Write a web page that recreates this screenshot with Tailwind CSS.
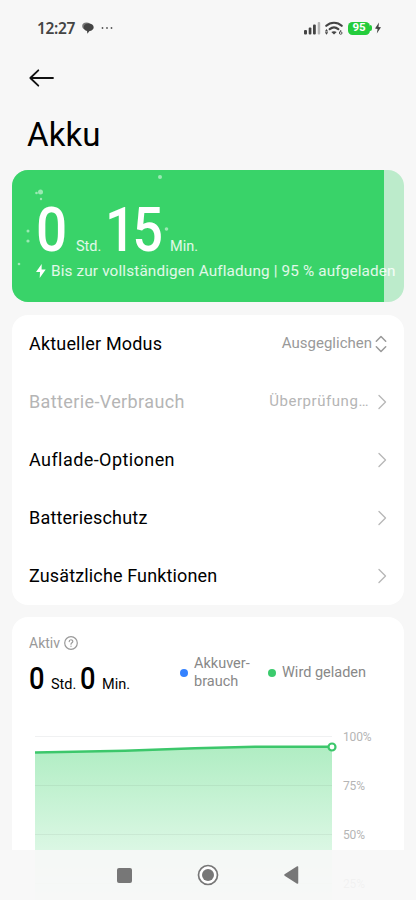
<!DOCTYPE html>
<html lang="de">
<head>
<meta charset="utf-8">
<title>Akku</title>
<script src="https://cdn.jsdelivr.net/npm/@tailwindcss/browser@4"></script>
</head>
<body class="bg-[#f7f7f7] text-black font-['Roboto','Noto_Sans',sans-serif]">
<div class="relative w-[416px] h-[900px] overflow-hidden">
  <!-- Status bar -->
  <header class="flex h-14 items-center pl-[37px] pr-[35px] text-[#444]">
    <span class="w-[38px] whitespace-nowrap font-['Noto_Sans',sans-serif] text-[15.500px] font-semibold leading-5 tracking-[-0.35px]">12:27</span>
    <svg class="ml-[7px]" width="12" height="12" viewBox="0 0 12 12" fill="#444"><ellipse cx="4.500" cy="4" rx="4.300" ry="3.600" fill="#777"/><path d="M6.500 1.500C9.500 1.500 11.700 3 11.700 5.200S9.800 8.700 7.500 9L5.400 11.700 5 9C3 8.600 1.700 7 1.700 5.200 1.700 3 3.500 1.500 6.500 1.500Z"/></svg>
    <svg class="ml-[7px]" width="12" height="4" viewBox="0 0 12 4" fill="#555"><circle cx="1.500" cy="2" r=".9"/><circle cx="6" cy="2" r=".9"/><circle cx="10.500" cy="2" r=".9"/></svg>
    <div class="ml-auto flex items-center">
      <svg width="17" height="14" viewBox="0 0 17 14" fill="#444"><rect x="0" y="9" width="3" height="4.500" rx="1"/><rect x="4.700" y="6.500" width="2.700" height="7" rx="1"/><rect x="9" y="3.500" width="2.800" height="10" rx="1"/><rect x="13.700" y="1" width="2.500" height="12.500" rx="1" fill="#b5b5b5"/></svg>
      <svg class="ml-[4px]" width="18" height="14" viewBox="0 0 18 14"><g fill="none" stroke="#444" stroke-width="2.200" stroke-linecap="round"><path d="M1.300 4.800C5.500 .7 12.500 .7 16.700 4.800"/><path d="M4.700 8.200C7.300 6 10.700 6 13.300 8.200"/></g><path d="M6.300 11Q9 9.300 11.700 11L9 13.500Z" fill="#444"/><path d="M1.500 8l1.700 2.500H-.2ZM1.500 13.700l1.700-2.500H-.2Z" fill="#444"/><circle cx="15.700" cy="12" r="1.300" fill="none" stroke="#444" stroke-width=".9"/><path d="M14.500 11.700L16 9" stroke="#444" stroke-width=".9"/></svg>
      <span class="ml-[5px] flex h-[13px] w-[22px] items-center justify-center rounded-[4.500px] bg-[#24cc3c] text-[11.500px] font-bold leading-none text-white">95</span>
      <span class="h-[6px] w-[2px] rounded-r-sm bg-[#24cc3c]"></span>
      <svg class="ml-[3px]" width="6" height="12" viewBox="0 0 6 12" fill="#444"><path d="M4 .5L0 6.600 2.600 6.900 1.800 11.500 6 5.300 3.500 5Z"/></svg>
    </div>
  </header>

  <div class="flex h-11 items-center pl-[29px]">
    <svg width="26" height="18" viewBox="0 0 26 18" fill="none" stroke="#111" stroke-width="1.800" stroke-linecap="round" stroke-linejoin="round"><path d="M1.500 9H24M9.300 1.300L1.300 9l8 7.700"/></svg>
  </div>
  <h1 class="h-[70px] pl-[27px] pt-[15px] text-[33px] leading-10 tracking-[0.1px]">Akku</h1>

  <main class="px-3">
    <!-- Charge summary -->
    <section class="relative h-[131.500px] overflow-hidden rounded-2xl bg-[#bcebcb] text-white">
      <div class="absolute inset-y-0 left-0 w-[372px] bg-[#39d369]"></div>
      <svg class="absolute left-0 top-0" width="180" height="132" fill="#9be9b4"><circle cx="148" cy="7" r="2"/><circle cx="28.500" cy="22" r="2.500"/><circle cx="24.500" cy="23" r="1.300"/><circle cx="29" cy="29" r="1.200"/><circle cx="154.500" cy="59" r="1.800"/><circle cx="16" cy="61" r="1.500"/><circle cx="16" cy="71" r="1.600"/><circle cx="7" cy="94" r="1.300"/></svg>
      <div class="relative flex h-[91px] items-baseline pl-[24px] pt-[25px] leading-[70px]">
        <span class="w-[40px] origin-left scale-x-[.9] text-[61px] font-medium leading-[70px]">0</span>
        <span class="w-[29px] text-[14.500px] text-white/85">Std.</span>
        <span class="w-[65px] origin-left scale-x-[.88] text-[61px] font-medium leading-[70px] tracking-[-3.500px]">15</span>
        <span class="text-[14.500px] text-white/85">Min.</span>
      </div>
      <div class="relative flex items-center pl-[24px] text-[15.300px] leading-5 tracking-[0.15px] text-white/85">
        <svg class="mr-[5px]" width="10" height="14" viewBox="0 0 10 14" fill="#fff"><path d="M5.700 0L0 8H4L3.700 14 9.700 5.500H5.600Z"/></svg>
        <span class="whitespace-nowrap">Bis zur vollständigen Aufladung | 95 % aufgeladen</span>
      </div>
    </section>

    <!-- Settings list -->
    <ul class="mt-[13px] rounded-2xl bg-white px-[17px] text-[18px]">
      <li class="flex h-[58px] items-center justify-between"><span class="tracking-[0.18px]">Aktueller Modus</span>
        <span class="flex items-center text-[15px] text-[#999]">Ausgeglichen<svg class="ml-[3px]" width="12" height="18" viewBox="0 0 12 18" fill="none" stroke="#999" stroke-width="1.500" stroke-linecap="round" stroke-linejoin="round"><path d="M1.300 6.200L6 1.500l4.700 4.700M1.300 11.800L6 16.500l4.700-4.700"/></svg></span></li>
      <li class="flex h-[58px] items-center justify-between text-[#b5b5b5]"><span class="tracking-[0.38px]">Batterie-Verbrauch</span>
        <span class="flex items-center text-[15px] tracking-[0.55px]">Überprüfung…<svg class="ml-[8px]" width="10" height="16" viewBox="0 0 10 16" fill="none" stroke="#b8b8b8" stroke-width="1.400" stroke-linecap="round" stroke-linejoin="round"><path d="M2 1.500L8.500 8 2 14.500"/></svg></span></li>
      <li class="flex h-[58px] items-center justify-between"><span class="tracking-[0.43px]">Auflade-Optionen</span><svg width="10" height="16" viewBox="0 0 10 16" fill="none" stroke="#b8b8b8" stroke-width="1.400" stroke-linecap="round" stroke-linejoin="round"><path d="M2 1.500L8.500 8 2 14.500"/></svg></li>
      <li class="flex h-[58px] items-center justify-between"><span class="tracking-[0.2px]">Batterieschutz</span><svg width="10" height="16" viewBox="0 0 10 16" fill="none" stroke="#b8b8b8" stroke-width="1.400" stroke-linecap="round" stroke-linejoin="round"><path d="M2 1.500L8.500 8 2 14.500"/></svg></li>
      <li class="flex h-[58px] items-center justify-between"><span class="tracking-[0.14px]">Zusätzliche Funktionen</span><svg width="10" height="16" viewBox="0 0 10 16" fill="none" stroke="#b8b8b8" stroke-width="1.400" stroke-linecap="round" stroke-linejoin="round"><path d="M2 1.500L8.500 8 2 14.500"/></svg></li>
    </ul>

    <!-- Usage chart -->
    <section class="mt-[12.500px] h-[300px] rounded-t-2xl bg-white pt-4">
      <div class="flex h-[94px] pl-[17px]">
        <div class="w-[151px]">
          <div class="flex items-center text-[14px] leading-5 text-[#999]"><span class="w-[30px]">Aktiv</span><svg class="ml-[5px]" width="14" height="14" viewBox="0 0 14 14" fill="none" stroke="#999" stroke-width="1.200" stroke-linecap="round"><circle cx="7" cy="7" r="6.300"/><path d="M5.200 5.600C5.200 3.200 8.800 3.200 8.800 5.400 8.800 6.800 7 6.800 7 8.200M7 10.200v.1"/></svg></div>
          <div class="flex items-baseline pt-[8px] leading-9">
            <span class="w-[22px] origin-left scale-x-[.88] text-[31px] font-medium">0</span><span class="w-[29px] text-[14.500px]">Std.</span><span class="w-[22px] origin-left scale-x-[.88] text-[31px] font-medium">0</span><span class="text-[14.500px]">Min.</span>
          </div>
        </div>
        <div class="flex h-[79px] items-center text-[14.500px] leading-[18px] text-[#888]">
          <i class="size-2 rounded-full bg-[#3482ff]"></i><span class="ml-[6px] w-[74px]">Akkuver-<br>brauch</span>
          <i class="size-2 rounded-full bg-[#3bcb6d]"></i><span class="ml-[6px]">Wird geladen</span>
        </div>
      </div>
      <div class="flex pl-[23px]">
        <svg class="overflow-visible" width="302" height="173" viewBox="0 0 302 173">
          <defs><linearGradient id="charge" x1="0" y1="20" x2="0" y2="173" gradientUnits="userSpaceOnUse"><stop offset="0" stop-color="#b0edc3"/><stop offset="1" stop-color="#f0fcf4"/></linearGradient></defs>
          <path d="M0 9.500H297" stroke="#f0f1f2"/>
          <path d="M0 25.500L90 23.800 220 20H297V173H0Z" fill="url(#charge)"/>
          <path d="M0 58.500H297M0 107.500H297M0 156.500H297" stroke="#000" stroke-opacity=".05"/>
          <path d="M0 25.500L90 23.800 160 21.300 220 19.700H297" fill="none" stroke="#3cc76b" stroke-width="2.500"/>
          <circle cx="297" cy="20" r="3.500" fill="#fff" stroke="#3cc76b" stroke-width="2.200"/>
        </svg>
        <div class="-mt-[14px] ml-[6px] text-[12px] leading-[49px] tracking-[-0.15px] text-[#b5b5b5]"><p>100%</p><p>75%</p><p>50%</p><p>25%</p></div>
      </div>
    </section>
  </main>

  <!-- System navigation -->
  <nav class="absolute inset-x-0 bottom-0 flex h-[50px] items-center bg-[#f7f7f7]/90">
    <svg class="ml-[117px]" width="15" height="15" viewBox="0 0 15 15"><rect width="15" height="15" rx="2" fill="#777"/></svg>
    <svg class="ml-[65px]" width="22" height="22" viewBox="0 0 22 22"><circle cx="11" cy="11" r="9.500" fill="#fff" stroke="#777" stroke-width="1.700"/><circle cx="11" cy="11" r="6" fill="#777"/></svg>
    <svg class="ml-[65px]" width="15" height="18" viewBox="0 0 15 18"><path d="M1 9L13.500 1V17Z" fill="#777" stroke="#777" stroke-width="1.500" stroke-linejoin="round"/></svg>
  </nav>
</div>
</body>
</html>
